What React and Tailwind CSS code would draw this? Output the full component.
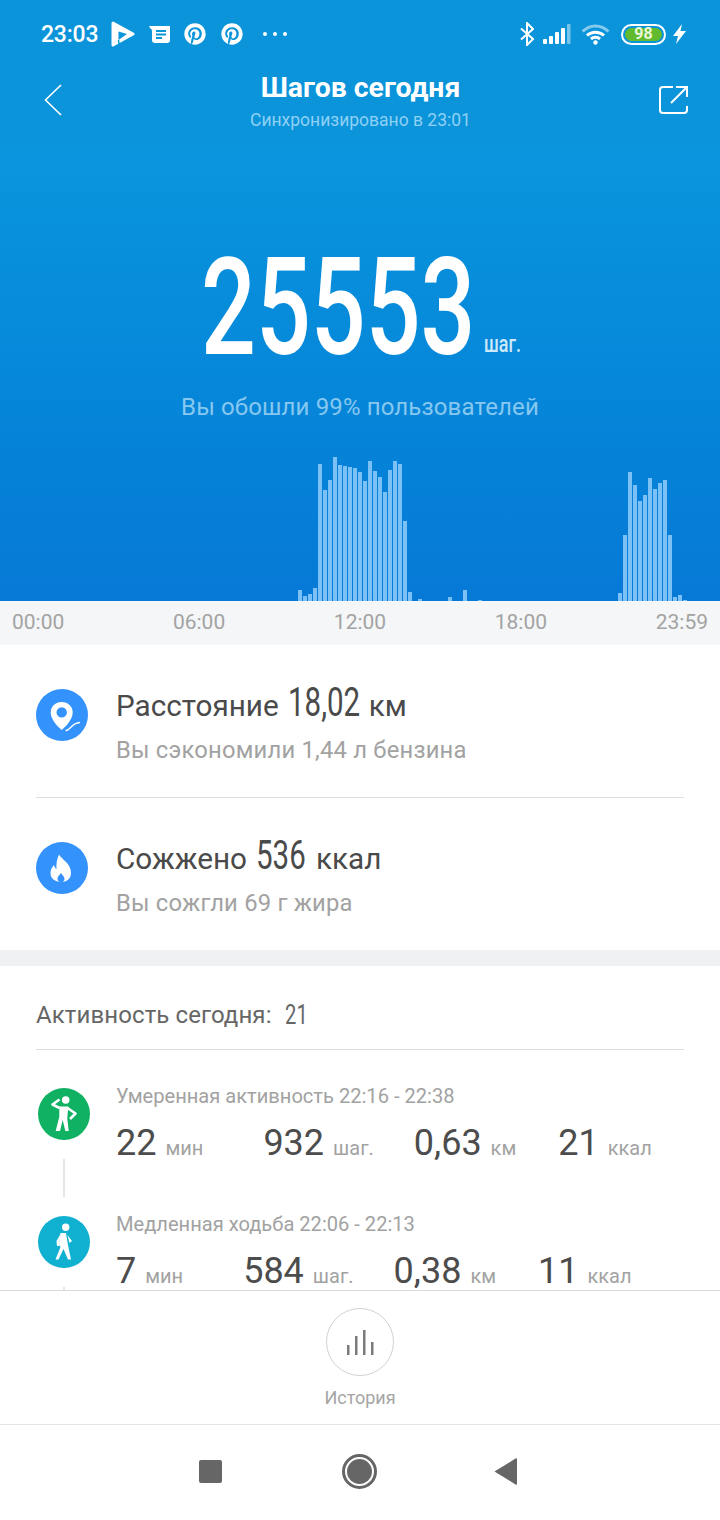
import React from "react";
import { FaPinterest } from "react-icons/fa";

const slots = {
  59: 11, 60: 5, 61: 7, 62: 13, 63: 137, 64: 111, 65: 121, 66: 144, 67: 136, 68: 135, 69: 134, 70: 133,
  71: 129, 72: 120, 73: 140, 74: 130, 75: 124, 76: 109, 77: 131, 78: 140, 79: 137, 80: 80, 81: 9, 83: 2,
  89: 4, 92: 11, 95: 1,
  123: 8, 124: 66, 125: 129, 126: 116, 127: 100, 128: 106, 129: 123, 130: 112, 131: 118, 132: 121, 133: 66,
  134: 4, 135: 6, 136: 1,
};
const bars = Array.from({ length: 143 }, (_, i) => slots[i] || 0);

function StatusBar() {
  return (
    <div className="flex h-[68px] items-center pl-[41px] pr-[34px] text-white">
      <span className="w-[58px] text-[23px] font-medium leading-none tracking-[-0.2px]">23:03</span>
      <svg className="ml-[12px]" width="24" height="26" viewBox="0 0 24 26">
        <path d="M2 2 L22 13 L2 24 Z" fill="#fff" stroke="#fff" strokeWidth="3" strokeLinejoin="round" />
        <path d="M7.500 10.500 L16 13 L7.500 19 Z" fill="#0b96db" />
        <path d="M7.500 19 L8.500 26" stroke="#0b96db" strokeWidth="1.500" />
      </svg>
      <svg className="ml-[14px]" width="21" height="18" viewBox="0 0 21 18">
        <path d="M0 1 H21 V15 Q21 18 18 18 H6 Q3 18 3 15 V6 Q3 4 1 3 Z" fill="#fff" />
        <path d="M7 6 H17 M7 9.5 H17 M7 13 H13" stroke="#0b96db" strokeWidth="2" />
      </svg>
      <FaPinterest className="ml-[14px]" size={22} />
      <FaPinterest className="ml-[15px]" size={22} />
      <div className="ml-[20px] flex w-[24px] justify-between">
        <span className="size-[4px] rounded-full bg-white" />
        <span className="size-[4px] rounded-full bg-white" />
        <span className="size-[4px] rounded-full bg-white" />
      </div>
      <div className="ml-auto flex items-center">
        <svg width="14" height="24" viewBox="0 0 14 24" fill="none" stroke="#fff" strokeWidth="2">
          <path d="M1 6.5 L13 17 L7 23 V1 L13 7 L1 17.5" />
        </svg>
        <svg className="ml-[9px]" width="28" height="20" viewBox="0 0 28 20">
          <rect x="0" y="15" width="4" height="5" rx="1" fill="#fff" />
          <rect x="6" y="12" width="4" height="8" rx="1" fill="#fff" />
          <rect x="12" y="8" width="4" height="12" rx="1" fill="#fff" />
          <rect x="18" y="4" width="4" height="16" rx="1" fill="#fff" />
          <rect x="24" y="0" width="3.5" height="20" rx="1" fill="#fff" opacity="0.45" />
        </svg>
        <svg className="ml-[10px]" width="29" height="21" viewBox="0 0 29 21" fill="none" stroke="#fff" strokeWidth="3">
          <path d="M1.5 7.5 C9 0 20 0 27.5 7.5" opacity="0.5" />
          <path d="M6 11.5 C11 7 18 7 23 11.5" />
          <path d="M10 15 C12.5 12.8 16.5 12.8 19 15" />
          <circle cx="14.5" cy="18.5" r="2.2" fill="#fff" stroke="none" />
        </svg>
        <div className="ml-[11px] flex h-[21px] w-[45px] items-center justify-center rounded-full border-2 border-white p-[2px]">
          <span className="flex h-full w-full items-center justify-center rounded-full bg-[#62bb2e] text-[16px] font-bold leading-none text-[#eaf7d8]">98</span>
        </div>
        <svg className="ml-[7px]" width="13" height="20" viewBox="0 0 13 20">
          <path d="M9 0 L0 12 H5 L3 20 L13 7 H7.5 Z" fill="#fff" />
        </svg>
      </div>
    </div>
  );
}

function TopBar() {
  return (
    <div className="flex h-[77px] items-start justify-between pl-[44px] pr-[31px]">
      <svg className="mt-[16px]" width="18" height="32" viewBox="0 0 18 32" fill="none" stroke="#fff" strokeWidth="1.6">
        <path d="M17 1 L1.5 16 L17 31" />
      </svg>
      <div className="flex flex-col items-center">
        <span className="text-[28.400px] font-bold leading-[40px] text-white">Шагов сегодня</span>
        <span className="text-[17.500px] leading-[24px] text-[#8fd0f5]">Синхронизировано в 23:01</span>
      </div>
      <svg className="mt-[17px]" width="30" height="30" viewBox="0 0 30 30" fill="none" stroke="#fff" strokeWidth="2">
        <path d="M14 2 H4 Q1 2 1 5 V25 Q1 28 4 28 H25 Q28 28 28 25 V21" />
        <path d="M12 18 L27 3 M17 2 H28 V12" />
      </svg>
    </div>
  );
}

function Hero() {
  return (
    <div className="flex h-[456px] flex-col bg-gradient-to-b from-[#0a96dd] to-[#0679d6]">
      <div className="mt-[98px] flex h-[130px] items-end pl-[201px]">
        <span className="w-[283px] shrink-0 origin-left scale-x-[0.71] whitespace-nowrap text-[136px] font-medium leading-[130px] text-white">25553</span>
        <span className="mb-[17px] w-[36px] origin-left scale-x-[0.75] whitespace-nowrap text-[24px] font-medium leading-[24px] text-[#cde9fb]">шаг.</span>
      </div>
      <p className="mt-[20px] text-center text-[24px] leading-[28px] tracking-[0.13px] text-[#86c8f0]">Вы обошли 99% пользователей</p>
      <div className="mt-auto flex h-[145px] items-end gap-[1px] pl-[3px]">
        {bars.map((h, i) => (
          <div key={i} className="w-[4px] bg-[#7cc1f6]" style={{ height: h }} />
        ))}
      </div>
    </div>
  );
}

function Axis() {
  return (
    <div className="flex h-[44px] items-center justify-between bg-[#f4f6f7] px-[12px] text-[21px] text-[#a3a3a3]">
      <span>00:00</span><span>06:00</span><span>12:00</span><span>18:00</span><span>23:59</span>
    </div>
  );
}

function PinIcon() {
  return (
    <svg width="52" height="52" viewBox="0 0 52 52" className="shrink-0">
      <circle cx="26" cy="26" r="26" fill="#3392fb" />
      <path fillRule="evenodd" d="M25.700 13 C19.500 13 14.700 17.500 14.700 23.500 C14.700 30 21 37 25.700 41 C30.500 37 36.700 30 36.700 23.500 C36.700 17.500 32 13 25.700 13 Z M25.700 18.200 A5.200 5.200 0 1 1 25.700 28.600 A5.200 5.200 0 1 1 25.700 18.200 Z" fill="#fff" />
      <path d="M29.500 41.500 C34 42 35 34 44 33.500" stroke="#3392fb" strokeWidth="5" fill="none" />
      <path d="M29.500 41.500 C34 42 35 34 44 33.500" stroke="#fff" strokeWidth="1.400" fill="none" />
    </svg>
  );
}

function FlameIcon() {
  return (
    <svg width="52" height="52" viewBox="0 0 52 52" className="shrink-0">
      <circle cx="26" cy="26" r="26" fill="#3392fb" />
      <path fillRule="evenodd" d="M23 12.500 C26 18 35 21 35 31 C35 37 30.500 40 25 40 C19 40 14.500 36.500 14.500 31 C14.500 27 16.500 25 18 23 C18.500 25 19.500 26.500 20.500 27 C20 22 21 17 23 12.500 Z M25 31 C23.500 33 21.500 34.500 21.500 37 C21.500 39 23 40 25 40 C27 40 28.500 39 28.500 37 C28.500 34.500 26 33 25 31 Z" fill="#fff" />
    </svg>
  );
}

function WalkStrong() {
  return (
    <svg width="52" height="52" viewBox="0 0 52 52" className="block shrink-0">
      <circle cx="26" cy="26" r="26" fill="#10b163" />
      <circle cx="27.700" cy="12" r="3.800" fill="#fff" />
      <path d="M21.500 20 L14.500 16.500 L21.500 11.500 M28.700 19.500 L37.500 25.500 L32 31" stroke="#fff" strokeWidth="2.600" fill="none" strokeLinejoin="round" />
      <path d="M21.300 18.500 H30.300 L29.300 30.300 L30.700 43 H27.300 L24.700 32 L22 43 H17.700 L21.300 28.700 Z" fill="#fff" />
    </svg>
  );
}

function WalkSlow() {
  return (
    <svg width="52" height="52" viewBox="0 0 52 52" className="block shrink-0">
      <circle cx="26" cy="26" r="26" fill="#0fb0d0" />
      <circle cx="27.700" cy="11.300" r="3.700" fill="#fff" />
      <path d="M22.500 17 H28 L30 29 L33 43.500 H30 L25.500 33 L20.500 43.500 H17.500 L22.500 31 L21 29 Z" fill="#fff" />
      <path d="M29.500 19 L34 25 L31.500 27 Z M22.500 18 L18.500 25 L19 30 L21 30 Z" fill="#fff" />
    </svg>
  );
}

function StatRow({ icon, children, sub }) {
  return (
    <div className="flex h-[152px] items-start pt-[44px]">
      {icon}
      <div className="ml-[28px] mt-[-6px] flex flex-col">
        <div className="flex h-[38px] items-baseline whitespace-nowrap text-[29.700px] leading-[38px] text-[#4a4a4a]">{children}</div>
        <span className="mt-[14px] text-[23.800px] leading-[30px] tracking-[0.2px] text-[#a2a2a2]">{sub}</span>
      </div>
    </div>
  );
}

function Val({ v, u, cls }) {
  return (
    <div className={"flex items-baseline whitespace-nowrap " + cls}>
      <span className="text-[36px] leading-[44px] text-[#4c4c4c]">{v}</span>
      <span className="ml-[9px] text-[20px] leading-[24px] text-[#a2a2a2]">{u}</span>
    </div>
  );
}

function ActivityRow({ icon, title, vals }) {
  return (
    <div className="flex h-[128px] shrink-0 pl-[38px]">
      <div className="flex w-[52px] shrink-0 flex-col items-center pt-[38px]">
        {icon}
        <div className="mt-[19px] h-[38px] w-[2px] shrink-0 bg-[#e6e6e6]" />
      </div>
      <div className="ml-[26px] flex flex-col pt-[33px]">
        <span className="text-[20.100px] leading-[26px] text-[#a2a2a2]">{title}</span>
        <div className="mt-[12px] flex">
          <Val v={vals[0]} u="мин" cls="mr-[60px]" />
          <Val v={vals[1]} u="шаг." cls="mr-[40px]" />
          <Val v={vals[2]} u="км" cls="mr-[42px]" />
          <Val v={vals[3]} u="ккал" cls="" />
        </div>
      </div>
    </div>
  );
}

export default function App() {
  return (
    <div className="flex h-[1520px] w-[720px] flex-col overflow-hidden bg-white font-['Roboto',sans-serif]">
      <div className="shrink-0 bg-[#0b94da]">
        <StatusBar />
        <TopBar />
      </div>
      <Hero />
      <Axis />
      <div className="flex h-[305px] shrink-0 flex-col px-[36px]">
        <div className="border-b border-[#dedede]">
          <StatRow icon={<PinIcon />} sub="Вы сэкономили 1,44 л бензина">
            <span>Расстояние</span>
            <span className="ml-[9px] w-[72px] origin-left scale-x-[0.72] text-[41px]">18,02</span>
            <span className="ml-[9px]">км</span>
          </StatRow>
        </div>
        <StatRow icon={<FlameIcon />} sub="Вы сожгли 69 г жира">
          <span>Сожжено</span>
          <span className="ml-[9px] w-[50px] origin-left scale-x-[0.72] text-[41px]">536</span>
          <span className="ml-[10px]">ккал</span>
        </StatRow>
      </div>
      <div className="h-[16px] shrink-0 bg-[#eef0f1]" />
      <div className="mx-[36px] flex h-[84px] shrink-0 items-center border-b border-[#dedede] pt-[14px] text-[24px] tracking-[0.1px] text-[#666]">
        <span>Активность сегодня:</span>
        <span className="ml-[13px] w-[22px] origin-left scale-x-[0.72] text-[28px]">21</span>
      </div>
      <div className="flex h-[240px] shrink-0 flex-col overflow-hidden">
        <ActivityRow icon={<WalkStrong />} title="Умеренная активность 22:16 - 22:38" vals={["22", "932", "0,63", "21"]} />
        <ActivityRow icon={<WalkSlow />} title="Медленная ходьба 22:06 - 22:13" vals={["7", "584", "0,38", "11"]} />
      </div>
      <div className="flex h-[135px] shrink-0 flex-col items-center border-y border-[#d9d9d9] border-b-[#e4e4e4] pt-[17px]">
        <div className="flex size-[68px] items-center justify-center rounded-full border border-[#d2d2d2]">
          <svg width="27" height="25" viewBox="0 0 27 25" fill="#7b7b7b">
            <rect x="0" y="15" width="2.500" height="10" />
            <rect x="8" y="6" width="2.500" height="19" />
            <rect x="16" y="0" width="2.500" height="25" />
            <rect x="24" y="12" width="2.500" height="13" />
          </svg>
        </div>
        <span className="mt-[10px] text-[18px] leading-[24px] text-[#a5a5a5]">История</span>
      </div>
      <div className="flex flex-1 items-center justify-center pb-[2px] pr-[4px]">
        <div className="size-[23px] rounded-[2px] bg-[#666]" />
        <div className="ml-[120px] flex size-[35px] items-center justify-center rounded-full border-[3px] border-[#666]">
          <div className="size-[25px] rounded-full bg-[#666]" />
        </div>
        <svg className="ml-[117px]" width="23" height="27" viewBox="0 0 23 27">
          <path d="M23 1 Q23 0 21.500 0.500 L0.500 13.500 L21.500 26.500 Q23 27 23 26 Z" fill="#666" />
        </svg>
      </div>
    </div>
  );
}
